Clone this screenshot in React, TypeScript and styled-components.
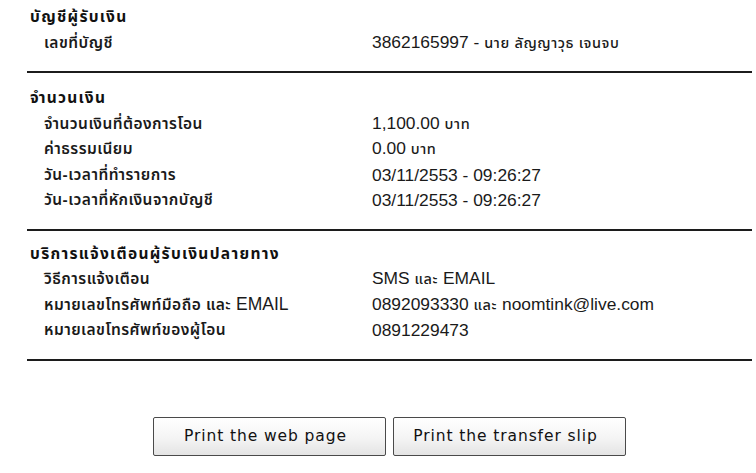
import React from 'react';
import styled, { createGlobalStyle } from 'styled-components';

const GlobalStyle = createGlobalStyle`
  html, body {
    margin: 0;
    padding: 0;
    background: #ffffff;
  }
  body {
    font-family: 'Liberation Sans', 'Noto Sans Thai', 'Noto Sans', sans-serif;
    color: #111;
  }
`;

const Page = styled.div`
  width: 725px;
  margin-left: 27px;
`;

const Section = styled.div<{ $top: number }>`
  display: grid;
  grid-template-columns: 345px 1fr;
  grid-auto-rows: 25.5px;
  align-items: center;
  padding: ${(p) => p.$top}px 0 15px;
  border-bottom: 2px solid #1c1c1c;
`;

const SectionTitle = styled.div`
  grid-column: 1 / span 2;
  padding-left: 3px;
  font-size: 15.5px;
  font-weight: 700;
  letter-spacing: 1.3px;
  color: #111;
`;

const Label = styled.div`
  padding-left: 17px;
  font-size: 15.5px;
  font-weight: 600;
  letter-spacing: 0.45px;
  color: #1a1a1a;
  white-space: nowrap;
`;

const LatinInLabel = styled.span`
  font-size: 17.5px;
  font-weight: 400;
  letter-spacing: 0;
`;

const Value = styled.div`
  font-size: 17.4px;
  color: #1a1a1a;
  white-space: nowrap;
`;

const ThaiSmall = styled.span`
  font-size: 14.5px;
  font-weight: 500;
  letter-spacing: 0.6px;
`;

const Actions = styled.div`
  display: flex;
  justify-content: center;
  gap: 7px;
  margin-top: 56px;
`;

const PrintButton = styled.button`
  width: 233px;
  height: 39px;
  padding: 0 8px 0 0;
  border: 1px solid #4a4a4a;
  border-radius: 2px;
  background: linear-gradient(#ffffff, #f4f4f4 55%, #e4e4e4);
  font-family: 'DejaVu Sans', 'Liberation Sans', sans-serif;
  font-size: 15.5px;
  letter-spacing: 0.9px;
  color: #111;
  cursor: pointer;
`;

type Row = { label: React.ReactNode; value: React.ReactNode };

const sections: { title: string; top: number; rows: Row[] }[] = [
  {
    title: 'บัญชีผู้รับเงิน',
    top: 5,
    rows: [
      { label: 'เลขที่บัญชี', value: <>3862165997 - <ThaiSmall>นาย ลัญญาวุธ เจนจบ</ThaiSmall></> },
    ],
  },
  {
    title: 'จำนวนเงิน',
    top: 13,
    rows: [
      { label: 'จำนวนเงินที่ต้องการโอน', value: <>1,100.00 <ThaiSmall>บาท</ThaiSmall></> },
      { label: 'ค่าธรรมเนียม', value: <>0.00 <ThaiSmall>บาท</ThaiSmall></> },
      { label: 'วัน-เวลาที่ทำรายการ', value: '03/11/2553 - 09:26:27' },
      { label: 'วัน-เวลาที่หักเงินจากบัญชี', value: '03/11/2553 - 09:26:27' },
    ],
  },
  {
    title: 'บริการแจ้งเตือนผู้รับเงินปลายทาง',
    top: 11,
    rows: [
      { label: 'วิธีการแจ้งเตือน', value: <>SMS <ThaiSmall>และ</ThaiSmall> EMAIL</> },
      {
        label: <>หมายเลขโทรศัพท์มือถือ และ <LatinInLabel>EMAIL</LatinInLabel></>,
        value: <>0892093330 <ThaiSmall>และ</ThaiSmall> noomtink@live.com</>,
      },
      { label: 'หมายเลขโทรศัพท์ของผู้โอน', value: '0891229473' },
    ],
  },
];

export default function App() {
  return (
    <>
      <GlobalStyle />
      <Page>
        {sections.map((s) => (
          <Section key={s.title} $top={s.top}>
            <SectionTitle>{s.title}</SectionTitle>
            {s.rows.map((r, i) => (
              <React.Fragment key={i}>
                <Label>{r.label}</Label>
                <Value>{r.value}</Value>
              </React.Fragment>
            ))}
          </Section>
        ))}
        <Actions>
          <PrintButton>Print the web page</PrintButton>
          <PrintButton>Print the transfer slip</PrintButton>
        </Actions>
      </Page>
    </>
  );
}
